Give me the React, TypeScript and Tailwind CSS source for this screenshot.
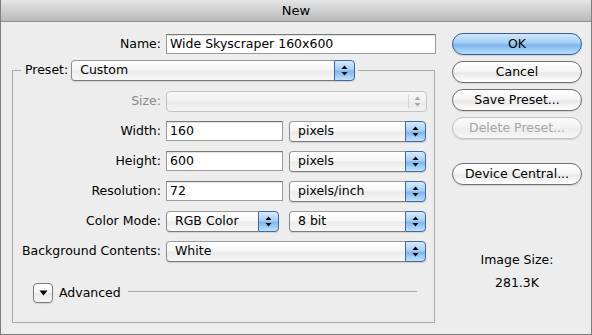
import React from "react";

const FONT = { fontFamily: '"DejaVu Sans", "Liberation Sans", sans-serif' };

function Arrows({ color = "#000" }: { color?: string }) {
  return (
    <svg width="7" height="11" viewBox="0 0 7 11">
      <path d="M3.5 0.5 L6.5 4 L0.5 4 Z" fill={color} />
      <path d="M0.5 7 L6.5 7 L3.5 10.5 Z" fill={color} />
    </svg>
  );
}

function Popup({ label, w, disabled = false }: { label: string; w: string; disabled?: boolean }) {
  if (disabled) {
    return (
      <div className={`${w} h-[21px] flex rounded-[4px] border border-[#c4c4c4] bg-[linear-gradient(to_bottom,#f8f8f8_0%,#f0f0f0_50%,#eaeaea_51%,#f2f2f2_100%)]`}>
        <div className="flex-1" />
        <div className="w-[18px] my-[3px] border-l border-[#d6d6d6] flex items-center justify-center">
          <Arrows color="#a9a9a9" />
        </div>
      </div>
    );
  }
  return (
    <div className={`${w} h-[21px] flex shadow-[0_1px_1px_rgba(0,0,0,0.12)] rounded-[4px]`}>
      <div className="flex-1 flex items-center pl-[8px] rounded-l-[4px] border-y border-l border-[#8c8c8c] border-t-[#9a9a9a] border-b-[#7a7a7a] bg-[linear-gradient(to_bottom,#ffffff_0%,#f6f6f6_45%,#ebebeb_55%,#f7f7f7_100%)] whitespace-nowrap overflow-hidden">
        {label}
      </div>
      <div className="w-[21px] rounded-r-[4px] border border-[#40679e] flex items-center justify-center bg-[linear-gradient(to_bottom,#d7eafc_0%,#a7cff5_45%,#7db7ef_55%,#c2e1fb_100%)]">
        <Arrows />
      </div>
    </div>
  );
}

function Field({ value, w }: { value: string; w: string }) {
  return (
    <div className={`${w} h-[20px] flex items-center pl-[3px] bg-white border border-[#9b9b9b] border-t-[#777777] shadow-[inset_0_1px_1px_rgba(0,0,0,0.12)] whitespace-nowrap overflow-hidden`}>
      {value}
    </div>
  );
}

function Btn({ label, kind = "normal" }: { label: string; kind?: "normal" | "default" | "disabled" }) {
  const cls =
    kind === "default"
      ? "border-[#3b5e93] bg-[linear-gradient(to_bottom,#d3e8fc_0%,#a2cdf5_45%,#7cb6ee_55%,#b9defc_100%)] text-black"
      : kind === "disabled"
      ? "border-[#c2c2c2] bg-[linear-gradient(to_bottom,#fafafa_0%,#f2f2f2_50%,#ececec_51%,#f6f6f6_100%)] text-[#a6a6a6]"
      : "border-[#6f6f6f] bg-[linear-gradient(to_bottom,#ffffff_0%,#f5f5f5_45%,#e8e8e8_55%,#ffffff_100%)] text-black";
  return (
    <div className={`h-[22px] w-full rounded-full border flex items-center justify-center shadow-[0_1px_1px_rgba(0,0,0,0.12)] ${cls}`}>
      {label}
    </div>
  );
}

function Row({ label, children, labelColor = "text-black" }: { label: string; children: React.ReactNode; labelColor?: string }) {
  return (
    <div className="h-[22px] flex items-center">
      <div className={`w-[148px] text-right ${labelColor}`}>{label}</div>
      <div className="ml-[5px] flex items-center">{children}</div>
    </div>
  );
}

export default function App() {
  return (
    <div
      className="w-[592px] h-[335px] flex flex-col bg-[#ededed] border-x border-b border-[#7d7d7d] text-[12.5px] text-black leading-none overflow-hidden"
      style={FONT}
    >
      <div className="h-[22px] shrink-0 flex items-center justify-center border-b border-[#8e8e8e] bg-[linear-gradient(to_bottom,#e4e4e4_0%,#cfcfcf_50%,#b8b8b8_100%)] text-[13px]">
        New
      </div>
      <div className="flex flex-1">
        {/* left column */}
        <div className="w-[424px] ml-[11px] flex flex-col">
          <div className="mt-[12px] h-[20px] flex items-center">
            <div className="w-[149px] text-right">Name:</div>
            <div className="ml-[5px]">
              <Field value="Wide Skyscraper 160x600" w="w-[270px]" />
            </div>
          </div>
          <fieldset className="mt-[5px] border border-[#a9a9a9] w-[423px] h-[264px]">
            <legend className="ml-[8px] pl-[4px] pr-[3px]">
              <div className="flex items-center h-[22px]">
                <span>Preset:</span>
                <div className="ml-[3px]">
                  <Popup label="Custom" w="w-[284px]" />
                </div>
              </div>
            </legend>
            <div className="pt-[9px] flex flex-col gap-[8px]">
              <Row label="Size:" labelColor="text-[#8a8a8a]">
                <Popup label="" w="w-[261px]" disabled />
              </Row>
              <Row label="Width:">
                <Field value="160" w="w-[117px]" />
                <div className="ml-[6px]"><Popup label="pixels" w="w-[137px]" /></div>
              </Row>
              <Row label="Height:">
                <Field value="600" w="w-[117px]" />
                <div className="ml-[6px]"><Popup label="pixels" w="w-[137px]" /></div>
              </Row>
              <Row label="Resolution:">
                <Field value="72" w="w-[117px]" />
                <div className="ml-[6px]"><Popup label="pixels/inch" w="w-[137px]" /></div>
              </Row>
              <Row label="Color Mode:">
                <Popup label="RGB Color" w="w-[113px]" />
                <div className="ml-[10px]"><Popup label="8 bit" w="w-[137px]" /></div>
              </Row>
              <Row label="Background Contents:">
                <Popup label="White" w="w-[260px]" />
              </Row>
            </div>
            <div className="mt-[20px] h-[22px] flex items-center pl-[20px] pr-[17px]">
              <div className="w-[20px] h-[20px] rounded-[4px] border border-[#7a7a7a] flex items-center justify-center bg-[linear-gradient(to_bottom,#ffffff_0%,#f3f3f3_50%,#e6e6e6_51%,#f8f8f8_100%)] shadow-[0_1px_1px_rgba(0,0,0,0.12)]">
                <svg width="9" height="6" viewBox="0 0 9 6">
                  <path d="M0.5 0.5 L8.5 0.5 L4.5 5.5 Z" fill="#000" />
                </svg>
              </div>
              <span className="ml-[6px]">Advanced</span>
              <div className="ml-[7px] flex-1 h-px bg-[#a9a9a9] mb-[4px]" />
            </div>
          </fieldset>
        </div>
        {/* right column */}
        <div className="w-[130px] ml-[16px] flex flex-col items-center">
          <div className="mt-[11px] w-full flex flex-col gap-[6px]">
            <Btn label="OK" kind="default" />
            <Btn label="Cancel" />
            <Btn label="Save Preset..." />
            <Btn label="Delete Preset..." kind="disabled" />
          </div>
          <div className="mt-[24px] w-full">
            <Btn label="Device Central..." />
          </div>
          <div className="mt-[69px]">Image Size:</div>
          <div className="mt-[10px]">281.3K</div>
        </div>
      </div>
    </div>
  );
}
